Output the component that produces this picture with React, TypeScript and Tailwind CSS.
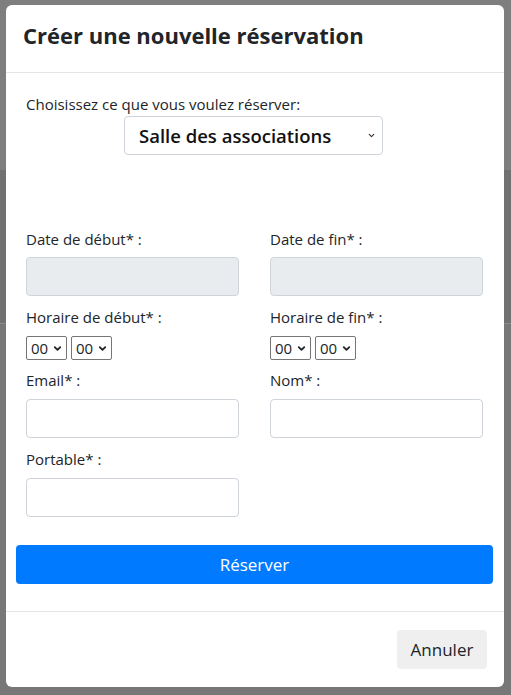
import { ChevronDown } from 'lucide-react'

function Label({ children }: { children: string }) {
  return <div className="h-[22px] leading-[22px] text-[15px] text-[#212529]">{children}</div>
}

function TextInput({ disabled }: { disabled?: boolean }) {
  return (
    <input
      type="text"
      disabled={disabled}
      className={`block w-full h-[39px] rounded-[4px] border border-[#ced4da] px-3 outline-none ${
        disabled ? 'bg-[#e9ecef]' : 'bg-white'
      }`}
    />
  )
}

function TimeSelect() {
  return (
    <div className="flex items-center h-[24px] w-[41px] border border-[#767676] rounded-[2px] bg-white pl-[4px] pr-[3px] text-[15px] text-[#212529]">
      <span className="leading-none">00</span>
      <ChevronDown className="ml-auto w-[11px] h-[11px]" strokeWidth={4} />
    </div>
  )
}

function TimePair() {
  return (
    <div className="flex gap-[4px]">
      <TimeSelect />
      <TimeSelect />
    </div>
  )
}

export default function App() {
  return (
    <div className="relative w-full h-[695px] overflow-hidden bg-[#777777] font-['Open_Sans',sans-serif]">
      {/* dimmed page behind the modal */}
      <div className="flex flex-col">
        <div className="h-[170px] bg-[#7e7e7e]" />
        <div className="h-[153px] bg-[#717171]" />
        <div className="h-px bg-[#8a8a8a]" />
      </div>

      <div className="absolute left-[6px] top-[5px] w-[498px] h-[682px] bg-white rounded-[6px] flex flex-col">
        <div className="h-[68px] border-b border-[#e5e5e5] pl-[17px] pt-[15px]">
          <h5 className="text-[22px] leading-[30px] font-bold text-[#212529]">Créer une nouvelle réservation</h5>
        </div>

        <div className="px-[20px] pt-[20px]">
          <div className="h-[23px] leading-[23px] text-[15px] text-[#212529]">Choisissez ce que vous voulez réserver:</div>
          <div className="flex justify-center pr-[3px]">
            <div className="flex items-center w-[259px] h-[39px] border border-[#ced4da] rounded-[4px] pl-[14px] pr-[6px] text-[18.5px] font-semibold text-[#111]">
              <span>Salle des associations</span>
              <ChevronDown className="ml-auto w-[9px] h-[9px] text-[#333]" strokeWidth={3} />
            </div>
          </div>

          <div className="grid grid-cols-2 gap-x-[31px] mt-[73px] w-[457px]">
            <div>
              <Label>Date de début* :</Label>
              <div className="mt-[7px]"><TextInput disabled /></div>
            </div>
            <div>
              <Label>Date de fin* :</Label>
              <div className="mt-[7px]"><TextInput disabled /></div>
            </div>

            <div className="mt-[10px]">
              <Label>Horaire de début* :</Label>
              <div className="mt-[8px]"><TimePair /></div>
            </div>
            <div className="mt-[10px]">
              <Label>Horaire de fin* :</Label>
              <div className="mt-[8px]"><TimePair /></div>
            </div>

            <div className="mt-[9px]">
              <Label>Email* :</Label>
              <div className="mt-[8px]"><TextInput /></div>
            </div>
            <div className="mt-[9px]">
              <Label>Nom* :</Label>
              <div className="mt-[8px]"><TextInput /></div>
            </div>

            <div className="mt-[10px]">
              <Label>Portable* :</Label>
              <div className="mt-[8px]"><TextInput /></div>
            </div>
          </div>
        </div>

        <div className="px-[10px] mt-[28px]">
          <button className="w-[477px] h-[39px] rounded-[4px] bg-[#007bff] text-white text-[17px]">Réserver</button>
        </div>

        <div className="mt-[27px] border-t border-[#e5e5e5] flex justify-end pt-[18px] pr-[17px]">
          <button className="w-[90px] h-[39px] rounded-[4px] bg-[#efefef] text-[17px] text-[#212529]">Annuler</button>
        </div>
      </div>
    </div>
  )
}
